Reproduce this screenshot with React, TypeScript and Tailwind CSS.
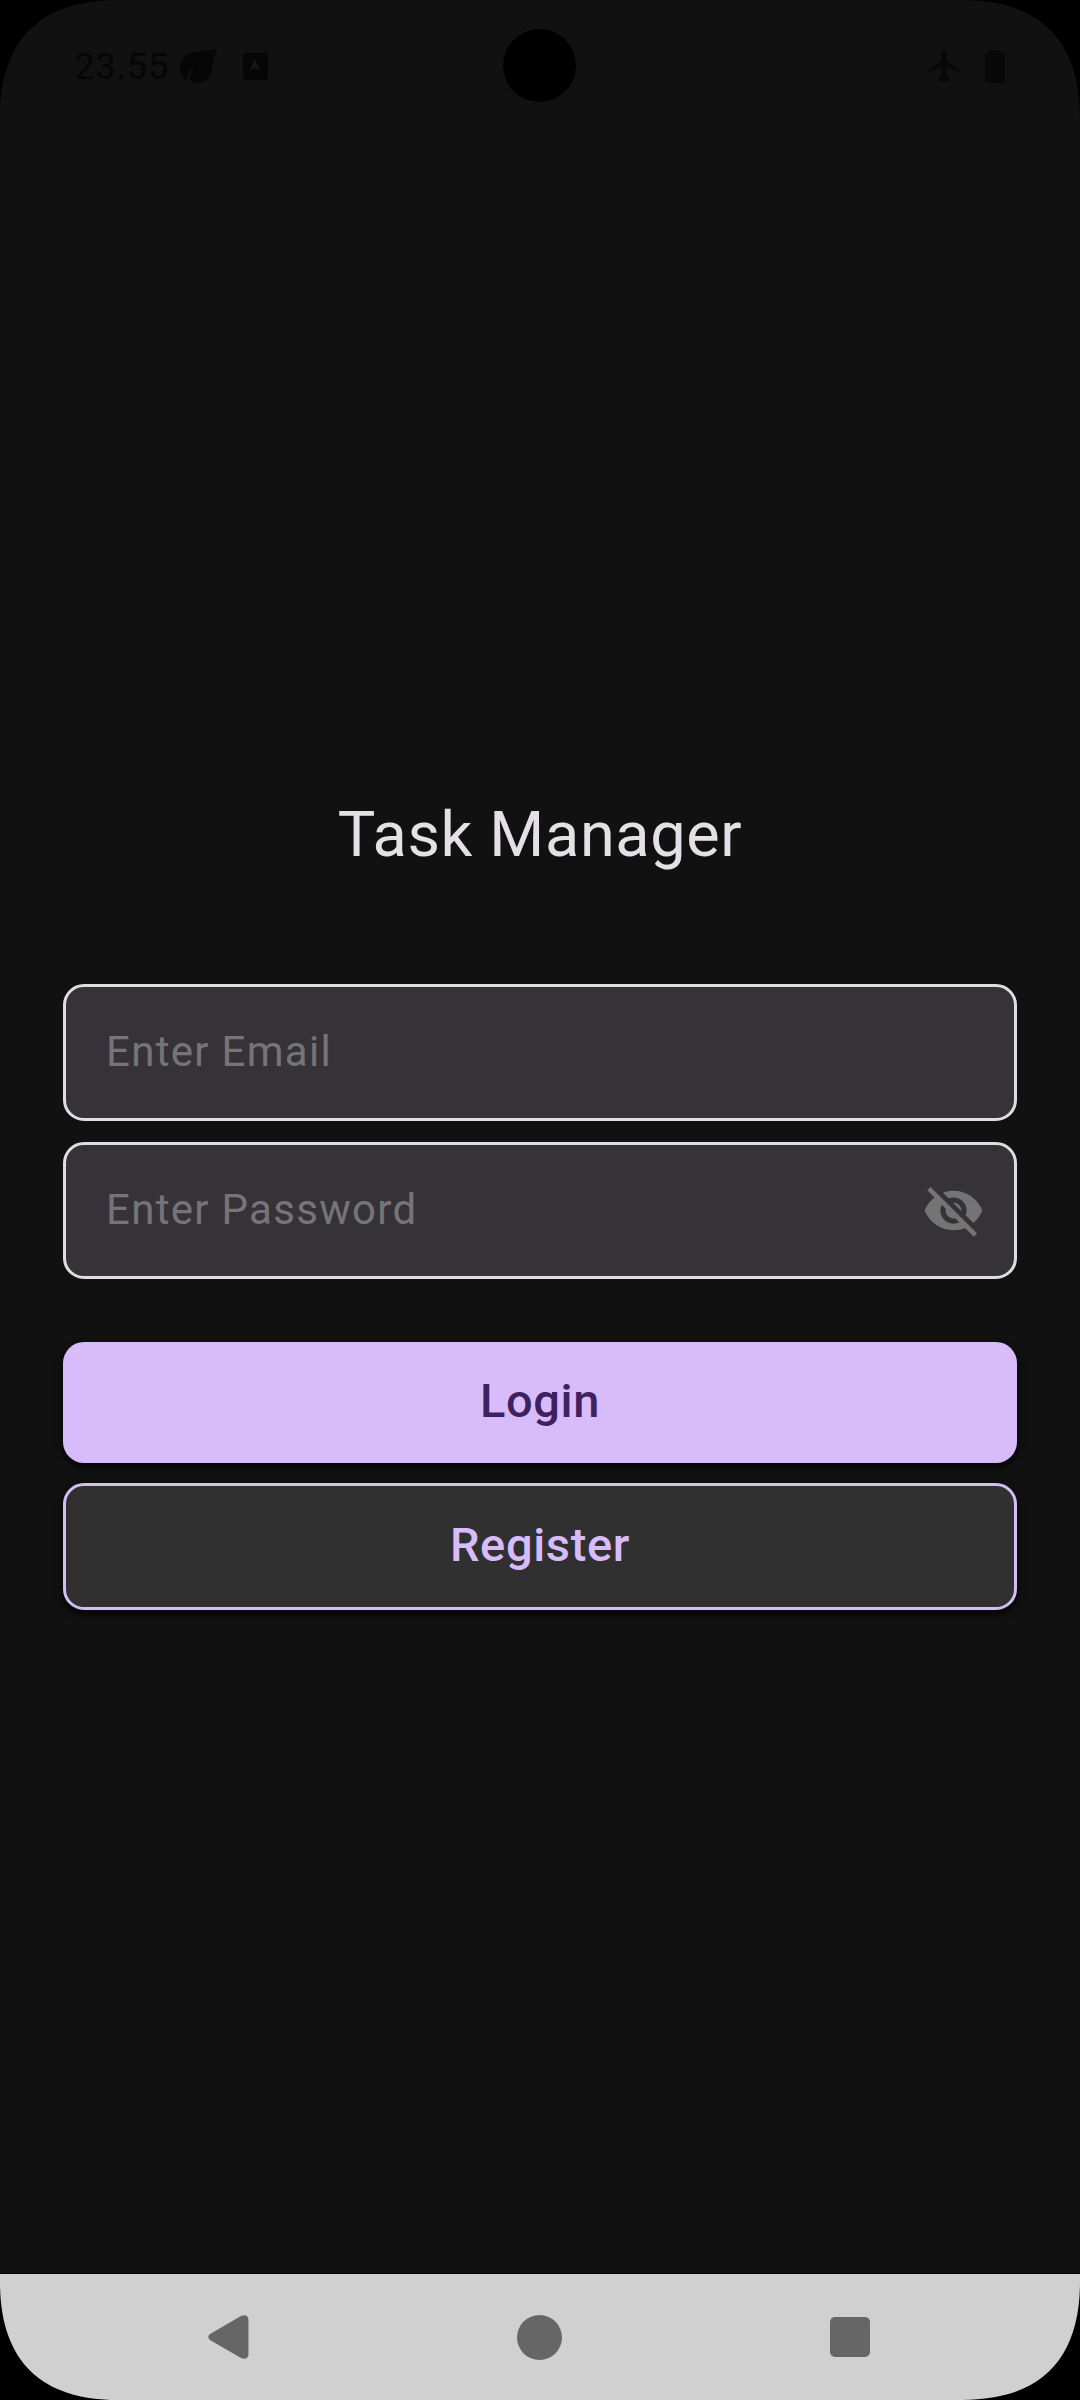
import { MdVisibilityOff } from "react-icons/md";

function Corner({ className }: { className: string }) {
  return (
    <svg viewBox="0 0 118 118" className={`absolute size-[118px] ${className}`} fill="#000">
      <path d="M0 118C0 40 40 0 118 0H0Z" />
    </svg>
  );
}

function StatusBar() {
  return (
    <header className="relative flex h-[132px] items-center justify-between pl-[74px] pr-[75px] text-[#060606]">
      <div className="flex items-center">
        <span className="w-[106px] text-[37px] leading-none tracking-[0.4px]">23.55</span>
        <svg viewBox="0 0 37 34" className="h-[34px] w-[37px]" fill="#060606">
          <path d="M37 0C34 5 34 13 32 20C30 29 25 34 17 34C14 34 12 33 9 31C10 26 12 22 15 17C10 21 7.500 25 6.500 31C2 28 0 23 0 18C0 11 5 6 12 4C20 1.500 30 2 37 0Z" />
        </svg>
        <svg viewBox="0 0 25 27" className="ml-[26px] h-[27px] w-[25px]">
          <rect width="25" height="27" rx="3" fill="#060606" />
          <path d="M6 19L12 6L18 19L14.500 15.500H10Z" fill="#171717" />
        </svg>
      </div>
      <div className="absolute left-[503px] top-[29px] size-[73px] rounded-full bg-black" />
      <div className="flex items-center">
        <svg viewBox="0 0 32 32" className="size-[32px]" fill="#080808">
          <path d="M31.500 22v-3L18.500 11V2.500a2.500 2.500 0 0 0-5 0V11L.5 19v3L13.500 18v8l-3 3v3l5.500-1.500 5.500 1.500v-3l-3-3v-8Z" />
        </svg>
        <svg viewBox="0 0 20 33" className="ml-[25px] h-[33px] w-[20px]" fill="#080808">
          <path d="M5 3V0H15V3H17Q20 3 20 6V30Q20 33 17 33H3Q0 33 0 30V6Q0 3 3 3Z" />
        </svg>
      </div>
    </header>
  );
}

function NavigationBar() {
  return (
    <nav className="flex h-[126px] items-center justify-between bg-[#d0d0d0] pl-[208px] pr-[210px]">
      <svg viewBox="0 0 41 44" className="h-[44px] w-[41px]" fill="#666">
        <path d="M2 19L33 1Q40-1.500 40.500 5V39Q40 45.500 33 43L2 25Q-1.500 22 2 19Z" />
      </svg>
      <div className="size-[45px] rounded-full bg-[#666]" />
      <div className="size-[40px] rounded-[5px] bg-[#666]" />
    </nav>
  );
}

const field =
  "block h-[137px] w-full rounded-[21px] border-[3px] border-[#dedede] bg-[#363338] pb-[2px] pl-[40px] text-[42px] tracking-[1.3px] text-[#e4e1e6] placeholder:text-[#767478] placeholder:opacity-100 outline-none";

export default function App() {
  return (
    <div className="relative flex h-[2400px] w-[1080px] flex-col overflow-hidden bg-[#111] font-[Roboto,sans-serif]">
      <StatusBar />
      <main className="flex flex-1 flex-col px-[63px] pt-[666px]">
        <h1 className="text-center text-[63px] leading-[74px] tracking-[0.63px] text-[#e4e1e6]">
          Task Manager
        </h1>
        <form className="mt-[112px] flex flex-col">
          <input className={field} placeholder="Enter Email" />
          <div className="relative mt-[21px]">
            <input className={field} placeholder="Enter Password" />
            <MdVisibilityOff className="absolute right-[32px] top-[37px] size-[63px] text-[#747474]" />
          </div>
          <button
            type="button"
            className="mt-[63px] h-[121px] rounded-[21px] bg-[#d7bbfb] pb-[2px] text-[47px] font-medium tracking-[0.65px] text-[#3f2160] shadow-[0_4px_6px_1px_rgba(0,0,0,0.7)]"
          >
            Login
          </button>
          <button
            type="button"
            className="mt-[20px] h-[127px] rounded-[21px] border-[3px] border-[#d0bff3] bg-[#303030] pb-[2px] text-[47px] font-medium tracking-[0.65px] text-[#d7bbfb] shadow-[0_4px_6px_1px_rgba(0,0,0,0.7)]"
          >
            Register
          </button>
        </form>
      </main>
      <div className="h-px bg-black" />
      <NavigationBar />
      <Corner className="left-0 top-0" />
      <Corner className="right-0 top-0 rotate-90" />
      <Corner className="bottom-0 right-0 rotate-180" />
      <Corner className="bottom-0 left-0 -rotate-90" />
    </div>
  );
}
